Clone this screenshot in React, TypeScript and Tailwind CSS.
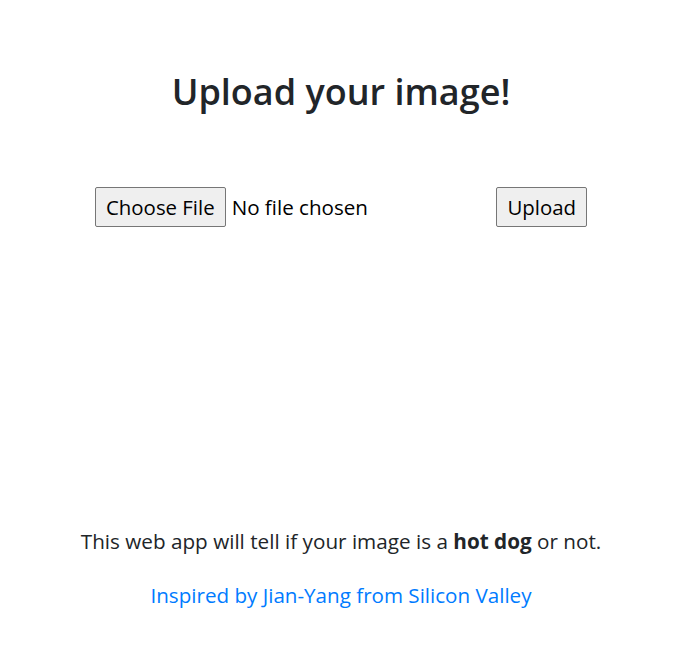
export default function App() {
  const font = { fontFamily: '"Open Sans", "Noto Sans", sans-serif' };
  return (
    <div className="min-h-[667px] pl-[4px] bg-white text-[#212529] flex flex-col items-center" style={font}>
      <h1 className="mt-[66px] text-[36px] leading-[52px] font-semibold">Upload your image!</h1>
      <div className="mt-[69px] w-[492px] flex items-center justify-between">
        <div className="flex items-center">
          <button className="h-[40px] px-[10px] text-[20.4px] bg-[#efefef] border border-[#767676] rounded-[2px] text-black">Choose File</button>
          <span className="ml-[6px] text-[20.6px] text-black">No file chosen</span>
        </div>
        <button className="h-[40px] px-[10px] text-[20.4px] bg-[#efefef] border border-[#767676] rounded-[2px] text-black">Upload</button>
      </div>
      <p className="mt-[299px] text-[20.7px] leading-[30px]">
        This web app will tell if your image is a <b className="font-bold">hot dog</b> or not.
      </p>
      <a className="mt-[24px] text-[20.6px] leading-[30px] text-[#007bff]" href="#">Inspired by Jian-Yang from Silicon Valley</a>
    </div>
  );
}
